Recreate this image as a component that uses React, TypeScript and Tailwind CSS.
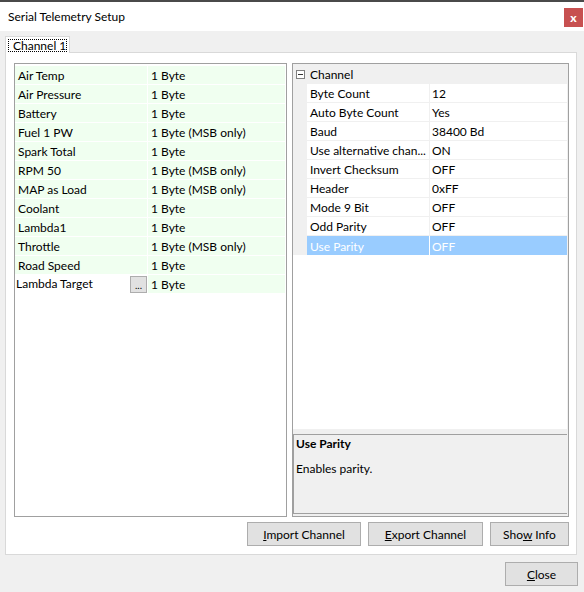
import React from 'react';

const leftRows: [string, string][] = [
  ['Air Temp', '1 Byte'],
  ['Air Pressure', '1 Byte'],
  ['Battery', '1 Byte'],
  ['Fuel 1 PW', '1 Byte (MSB only)'],
  ['Spark Total', '1 Byte'],
  ['RPM 50', '1 Byte (MSB only)'],
  ['MAP as Load', '1 Byte (MSB only)'],
  ['Coolant', '1 Byte'],
  ['Lambda1', '1 Byte'],
  ['Throttle', '1 Byte (MSB only)'],
  ['Road Speed', '1 Byte'],
];

const props: [string, string][] = [
  ['Byte Count', '12'],
  ['Auto Byte Count', 'Yes'],
  ['Baud', '38400 Bd'],
  ['Use alternative chan...', 'ON'],
  ['Invert Checksum', 'OFF'],
  ['Header', '0xFF'],
  ['Mode 9 Bit', 'OFF'],
  ['Odd Parity', 'OFF'],
];

const WinButton: React.FC<{ className: string; children: React.ReactNode }> = ({ className, children }) => (
  <button className={`h-[24px] bg-[#e1e1e1] border border-[#adadad] text-[12px] text-black flex items-center justify-center pt-px ${className}`}>
    {children}
  </button>
);

export default function App() {
  return (
    <div className="w-[584px] h-[592px] bg-[#f0f0f0] border-t-2 border-[#4a4a4a] font-['Lato','Noto_Sans',sans-serif] text-[12px] text-black leading-none overflow-hidden">
      {/* title bar */}
      <div className="h-[29px] bg-white flex justify-between">
        <span className="pl-[8px] pt-[9px] text-[12px]">Serial Telemetry Setup</span>
        <div className="mt-[6px] mr-[1px] w-[19px] h-[19px] bg-[#c75050] text-white text-[12px] font-black flex items-center justify-center">
          x
        </div>
      </div>

      <div className="px-[5px] pt-[5px]">
        {/* tab header */}
        <div className="flex">
          <div className="relative z-10 -mb-px h-[17px] w-[65px] bg-white border border-b-0 border-[#d9d9d9] px-[2px] pt-[2px]">
            <div className="h-[13px] border border-dotted border-black flex items-center pl-[4px] pt-px text-[12px] whitespace-nowrap">Channel 1</div>
          </div>
        </div>

        {/* tab page */}
        <div className="w-[572px] h-[503px] bg-white border border-[#d9d9d9] pl-[8px] pr-[6px] pt-[10px] pb-[8px] flex flex-col">
          <div className="flex gap-[5px]">
            {/* left list */}
            <div className="w-[273px] h-[454px] border border-[#a0a0a0] bg-white pt-px pr-px">
              {leftRows.map(([n, v]) => (
                <div key={n} className="flex h-[19px] border-t border-white bg-[#f0fff0]">
                  <div className="w-[133px] pl-[3px] pt-px flex items-center border-r border-white">{n}</div>
                  <div className="flex-1 pl-[3px] pt-px flex items-center">{v}</div>
                </div>
              ))}
              <div className="flex h-[19px] border-t border-white bg-[#f0fff0]">
                <div className="w-[133px] pl-[1px] bg-white flex items-center justify-between border-r border-white">
                  <span className="-mt-[1px]">Lambda Target</span>
                  <span className="w-[17px] h-[17px] bg-[#e1e1e1] border border-[#adadad] flex items-end justify-center pb-[2px] text-[10px]">...</span>
                </div>
                <div className="flex-1 pl-[3px] pt-[2px] flex items-center">1 Byte</div>
              </div>
              <div className="h-px bg-white" />
            </div>

            {/* property grid */}
            <div className="w-[277px] h-[454px] border border-[#a0a0a0] bg-[#f0f0f0] pr-px flex flex-col">
              <div className="h-[365px] bg-white flex flex-col">
                <div className="h-[20px] bg-[#f0f0f0] flex items-center">
                  <div className="w-[14px] flex justify-center">
                    <span className="w-[9px] h-[9px] border border-[#808080] bg-white flex items-center justify-center">
                      <span className="w-[5px] h-px bg-[#333]" />
                    </span>
                  </div>
                  <span className="pl-[3px] pt-[2px]">Channel</span>
                </div>
                {props.map(([n, v]) => (
                  <div key={n} className="flex h-[19px]">
                    <div className="w-[14px] bg-[#f0f0f0]" />
                    <div className="flex-1 flex border-b border-[#f0f0f0]">
                      <div className="w-[123px] pl-[3px] pt-[2px] flex items-center border-r border-[#f0f0f0] whitespace-nowrap">{n}</div>
                      <div className="flex-1 pl-[2px] pt-[2px] flex items-center">{v}</div>
                    </div>
                  </div>
                ))}
                <div className="flex h-[19px]">
                  <div className="w-[14px] bg-[#f0f0f0]" />
                  <div className="flex-1 flex bg-[#99ccff] text-white">
                    <div className="w-[123px] pl-[3px] pt-[2px] flex items-center border-r border-white">Use Parity</div>
                    <div className="flex-1 pl-[2px] pt-[2px] flex items-center">OFF</div>
                  </div>
                </div>
              </div>
              <div className="h-[5px]" />
              <div className="h-[80px] border border-[#a0a0a0] border-r-0 bg-[#f0f0f0] px-[2px] pt-[3px]">
                <div className="font-bold">Use Parity</div>
                <div className="mt-[13px]">Enables parity.</div>
              </div>
            </div>
          </div>

          <div className="flex justify-end gap-[7px] mt-[5px] pr-px">
            <WinButton className="w-[114px]"><span><span className="underline">I</span>mport Channel</span></WinButton>
            <WinButton className="w-[115px]"><span><span className="underline">E</span>xport Channel</span></WinButton>
            <WinButton className="w-[79px]"><span>Sho<span className="underline">w</span> Info</span></WinButton>
          </div>
        </div>

        <div className="flex justify-end mt-[7px] pr-px">
          <WinButton className="w-[73px]"><span><span className="underline">C</span>lose</span></WinButton>
        </div>
      </div>
    </div>
  );
}
